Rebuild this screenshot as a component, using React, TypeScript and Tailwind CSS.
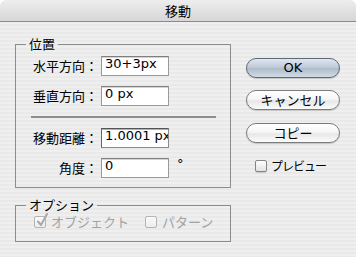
import React from 'react';

const jp = "font-['Noto_Sans_CJK_JP',sans-serif]";
const latin = "font-['DejaVu_Sans','Noto_Sans_CJK_JP',sans-serif]";

const Field = ({ value, active }: { value: string; active?: boolean }) => (
  <div
    className={`w-[68px] h-[20px] shrink-0 bg-white border overflow-hidden whitespace-nowrap pl-[3px] text-[13px] leading-[14px] text-black ${latin} ${
      active
        ? 'border-[#8a8a8a] border-t-[#555555] border-l-[#666666] shadow-[inset_0_1px_0_#b0b0b0]'
        : 'border-[#9a9a9a] border-t-[#7f7f7f] shadow-[inset_0_1px_0_#d4d4d4]'
    }`}
  >
    {value}
  </div>
);

const Row = ({ label, value, active, suffix }: { label: string; value: string; active?: boolean; suffix?: string }) => (
  <div className="flex items-center">
    <div className={`w-[82px] text-right text-[13px] leading-[16px] mr-[3px] ${jp}`}>{label}</div>
    <Field value={value} active={active} />
    {suffix && <span className={`ml-[8px] self-start mt-[-1px] text-[13px] leading-[14px] ${latin}`}>{suffix}</span>}
  </div>
);

const Checkbox = ({ checked, disabled }: { checked?: boolean; disabled?: boolean }) => (
  <span
    className={`relative block w-[12px] h-[12px] shrink-0 rounded-[2px] border ${
      disabled
        ? 'border-[#b4b4b4] bg-[linear-gradient(180deg,#fafafa,#ececec)]'
        : 'border-[#868686] bg-[linear-gradient(180deg,#ffffff,#e2e2e2)] shadow-[0_1px_1px_rgba(0,0,0,0.15)]'
    }`}
  >
    {checked && (
      <svg className="absolute left-[1px] top-[-4px]" width="13" height="14" viewBox="0 0 13 14">
        <path d="M2 8.5 L5 12 L11 1" fill="none" stroke={disabled ? '#a9a9a9' : '#222'} strokeWidth="2" strokeLinecap="round" strokeLinejoin="round" />
      </svg>
    )}
  </span>
);

const Button = ({ label, primary, isLatin }: { label: string; primary?: boolean; isLatin?: boolean }) => (
  <div
    className={`w-[94px] h-[20px] rounded-full border flex items-center justify-center text-[13px] leading-[16px] text-black shadow-[0_1px_1px_rgba(0,0,0,0.18)] ${
      isLatin ? latin : jp
    } ${
      primary
        ? 'border-[#5d6a78] bg-[linear-gradient(180deg,#dfe6ee_0%,#c0cbd8_45%,#aebccb_55%,#d2dce7_100%)]'
        : 'border-[#7b7b7b] bg-[linear-gradient(180deg,#ffffff_0%,#f6f6f6_45%,#e7e7e7_55%,#fbfbfb_100%)]'
    }`}
  >
    {label}
  </div>
);

export default function App() {
  return (
    <div className={`w-[356px] h-[257px] overflow-hidden rounded-t-[6px] flex flex-col text-black ${jp}`}>
      <div className="h-[22px] shrink-0 border-b border-[#8a8a8a] bg-[linear-gradient(180deg,#ededed_0%,#d6d6d6_100%)] flex items-center justify-center text-[13px] leading-[16px]">
        移動
      </div>
      <div className="flex-1 flex pl-[15px] pt-[14px] bg-[repeating-linear-gradient(180deg,#efefef_0px,#efefef_2px,#e9e9e9_2px,#e9e9e9_4px)]">
        <div className="w-[216px] flex flex-col">
          <fieldset className="border border-[#8c8c8c] pt-[4px] pb-[9px]">
            <legend className="ml-[10px] px-[3px] text-[13px] leading-[16px]">位置</legend>
            <div className="flex flex-col gap-[10px]">
              <Row label="水平方向：" value="30+3px" />
              <Row label="垂直方向：" value="0 px" />
              <div className="h-[2px] bg-[#8e8e8e] ml-[15px] mr-[14px]" />
              <Row label="移動距離：" value="1.0001 px" active />
              <Row label="角度：" value="0" suffix="°" />
            </div>
          </fieldset>
          <fieldset className="mt-[9px] border border-[#8c8c8c] pt-[1px] pb-[11px]">
            <legend className="ml-[10px] px-[3px] text-[13px] leading-[16px]">オプション</legend>
            <div className="flex items-center h-[16px] pl-[18px] text-[13px] leading-[16px] text-[#a2a2a2]">
              <Checkbox checked disabled />
              <span className="ml-[5px]">オブジェクト</span>
              <span className="ml-[16px]"><Checkbox disabled /></span>
              <span className="ml-[5px]">パターン</span>
            </div>
          </fieldset>
        </div>
        <div className="ml-[15px] pt-[22px] flex flex-col">
          <Button label="OK" primary isLatin />
          <div className="mt-[12px]"><Button label="キャンセル" /></div>
          <div className="mt-[13px]"><Button label="コピー" /></div>
          <div className="mt-[16px] ml-[9px] flex items-center h-[14px]">
            <Checkbox />
            <span className="ml-[4px] text-[12px] leading-[16px] tracking-[-1px]">プレビュー</span>
          </div>
        </div>
      </div>
    </div>
  );
}
